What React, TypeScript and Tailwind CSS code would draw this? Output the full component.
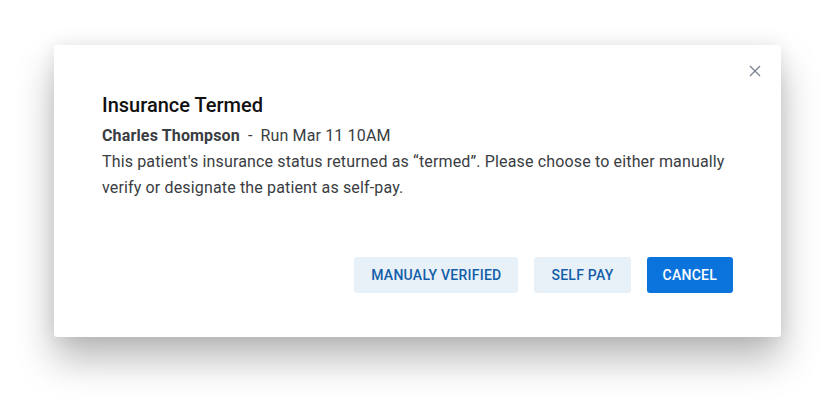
export default function App() {
  return (
    <div className="flex h-[403px] w-full justify-center bg-white pt-[45px] font-['Roboto',sans-serif]">
      <div className="relative h-[292px] w-[727px] rounded-[3px] bg-white px-12 pt-[46px] shadow-[0_22px_38px_rgba(0,0,0,0.28),0_0_18px_rgba(0,0,0,0.08)]">
        <button className="absolute right-[20px] top-[20px] flex h-[12px] w-[12px] items-center justify-center text-[#7b8494]">
          <svg width="12" height="12" viewBox="0 0 12 12" fill="none">
            <path d="M1 1L11 11M11 1L1 11" stroke="currentColor" strokeWidth="1.4" />
          </svg>
        </button>

        <h2 className="text-[20px] font-medium leading-[28px] text-[#111]">Insurance Termed</h2>

        <div className="mt-[4px] text-[16px] leading-[26px] tracking-[0.15px] text-[#3a3d42]">
          <div>
            <span className="font-bold">Charles Thompson</span>
            <span className="mx-[8px]">-</span>
            <span>Run Mar 11 10AM</span>
          </div>
          <p>
            This patient's insurance status returned as “termed”. Please choose to either manually verify or
            designate the patient as self-pay.
          </p>
        </div>

        <div className="mt-[56px] flex justify-end gap-4">
          <button className="h-9 rounded-[3px] bg-[#e8f1f8] px-[17px] text-[14px] font-medium tracking-[0.25px] text-[#135ea8]">
            MANUALY VERIFIED
          </button>
          <button className="h-9 rounded-[3px] bg-[#e8f1f8] px-[17px] text-[14px] font-medium tracking-[0.25px] text-[#135ea8]">
            SELF PAY
          </button>
          <button className="h-9 rounded-[3px] bg-[#0b74dc] px-[16px] text-[14px] font-medium tracking-[0.25px] text-white">
            CANCEL
          </button>
        </div>
      </div>
    </div>
  );
}
